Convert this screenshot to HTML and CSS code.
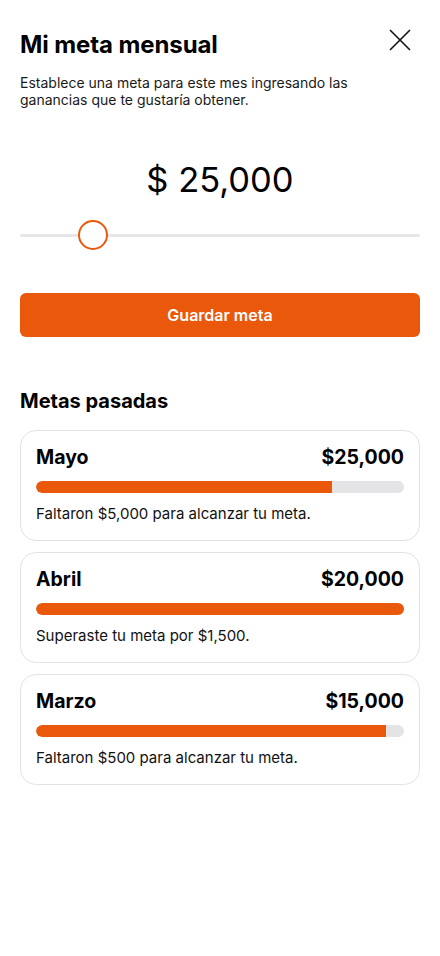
FILE: index.html
```html
<!DOCTYPE html>
<html lang="es">
<head>
<meta charset="utf-8">
<link rel="stylesheet" href="styles.css">
</head>
<body>
<main class="sheet">
  <header class="head">
    <h1 class="title">Mi meta mensual</h1>
    <button class="close" aria-label="Cerrar">
      <svg width="22" height="22" viewBox="0 0 22 22"><path d="M1 1 L21 21 M21 1 L1 21" stroke="#111" stroke-width="1.6" fill="none"/></svg>
    </button>
  </header>
  <p class="desc">Establece una meta para este mes ingresando las ganancias que te gustaría obtener.</p>
  <div class="amount">$ 25,000</div>
  <div class="slider">
    <div class="track"></div>
    <div class="thumb" style="left: 58px"></div>
  </div>
  <button class="save">Guardar meta</button>
  <h2 class="subtitle">Metas pasadas</h2>
  <section class="list">
    <article class="card">
      <div class="row"><span class="month">Mayo</span><span class="value">$25,000</span></div>
      <div class="bar"><div class="fill" style="width: 80.5%"></div></div>
      <p class="note">Faltaron $5,000 para alcanzar tu meta.</p>
    </article>
    <article class="card">
      <div class="row"><span class="month">Abril</span><span class="value">$20,000</span></div>
      <div class="bar"><div class="fill" style="width: 100%"></div></div>
      <p class="note">Superaste tu meta por $1,500.</p>
    </article>
    <article class="card">
      <div class="row"><span class="month">Marzo</span><span class="value">$15,000</span></div>
      <div class="bar"><div class="fill" style="width: 95%"></div></div>
      <p class="note">Faltaron $500 para alcanzar tu meta.</p>
    </article>
  </section>
</main>
</body>
</html>
```
FILE: styles.css
```css
* { box-sizing: border-box; }
html, body { margin: 0; padding: 0; background: #fff; }
body {
  font-family: Inter, "Noto Sans", "Liberation Sans", sans-serif;
  color: #111;
  width: 440px;
  height: 956px;
}
.sheet {
  padding: 28px 20px 0 20px;
  display: flex;
  flex-direction: column;
}
.head {
  display: flex;
  justify-content: space-between;
  align-items: center;
  height: 32px;
}
.title {
  margin: 0;
  font-size: 24px;
  font-weight: 700;
  letter-spacing: -0.1px;
  color: #000;
}
.close {
  border: 0;
  background: none;
  padding: 0;
  width: 22px;
  height: 22px;
  margin-right: 9px;
  margin-top: -8px;
}
.desc {
  margin: 14px 0 0 0;
  font-size: 14px;
  line-height: 17px;
  color: #1a1a1a;
  width: 380px;
}
.amount {
  margin-top: 51px;
  text-align: center;
  font-size: 34.5px;
  line-height: 42px;
  color: #000;
}
.slider {
  position: relative;
  margin-top: 19px;
  height: 30px;
  display: flex;
  align-items: center;
}
.track {
  width: 100%;
  height: 3px;
  border-radius: 2px;
  background: #e6e6e6;
}
.thumb {
  position: absolute;
  top: 0;
  width: 30px;
  height: 30px;
  border-radius: 50%;
  border: 2px solid #ea580c;
  background: #fff;
}
.save {
  margin-top: 43px;
  height: 44px;
  border: 0;
  border-radius: 6px;
  background: #ea580c;
  color: #fff;
  font-family: inherit;
  font-size: 16px;
  font-weight: 600;
}
.subtitle {
  margin: 52px 0 0 0;
  font-size: 20px;
  line-height: 24px;
  font-weight: 700;
  color: #000;
}
.list {
  margin-top: 17px;
  display: flex;
  flex-direction: column;
  gap: 11px;
}
.card {
  border: 1px solid #e3e3e3;
  border-radius: 16px;
  padding: 14px 15px 17px 15px;
  height: 111px;
}
.row {
  display: flex;
  justify-content: space-between;
  align-items: center;
  height: 24px;
  font-size: 19.5px;
  font-weight: 700;
  color: #000;
}
.bar {
  margin-top: 12px;
  height: 12px;
  border-radius: 6px;
  background: #e4e4e7;
  overflow: hidden;
}
.fill {
  height: 100%;
  background: #ea580c;
  border-radius: 6px 0 0 6px;
}
.note {
  margin: 12px 0 0 0;
  font-size: 15px;
  line-height: 18px;
  color: #111;
}
```
